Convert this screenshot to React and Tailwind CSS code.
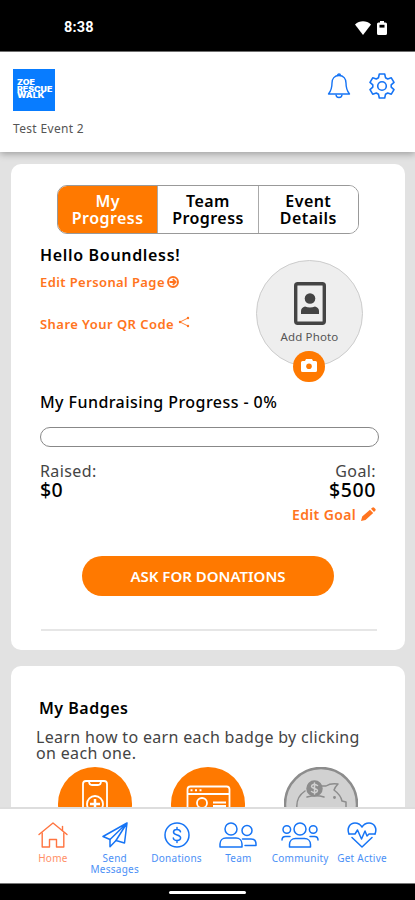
import React, { useState } from "react";

const HomeIcon = () => (
  <svg width="30" height="26" viewBox="0 0 30 26" fill="none" stroke="currentColor" strokeWidth="1.4" strokeLinejoin="round" strokeLinecap="round">
    <path d="M1 12.5 15 1l14 11.5" />
    <path d="M4.200 11v14h7.300v-7.500h7v7.500h7.300V11" />
    <path d="M24.500 8.500v-4" />
  </svg>
);

const SendIcon = () => (
  <svg width="26" height="26" viewBox="0 0 26 26" fill="none" stroke="currentColor" strokeWidth="1.500" strokeLinejoin="round" strokeLinecap="round">
    <path d="M25 1 1 14.500l7 3L25 1l-2.500 20-8.500-2.500L25 1" />
    <path d="M8 17.500v7.300l6-6.300" />
  </svg>
);

const DollarIcon = () => (
  <svg width="26" height="26" viewBox="0 0 26 26" fill="none" stroke="currentColor" strokeWidth="1.500" strokeLinecap="round">
    <circle cx="13" cy="13" r="12" />
    <path d="M16.500 9.800c-.3-1.500-1.600-2.300-3.500-2.300s-3.500.9-3.500 2.600c0 3.900 7.100 1.900 7.100 5.700 0 1.800-1.600 2.700-3.600 2.700-2.100 0-3.500-.9-3.700-2.500M13 5.500v2M13 18.500v2" />
  </svg>
);

const TeamIcon = () => (
  <svg width="38" height="26" viewBox="0 0 38 26" fill="none" stroke="currentColor" strokeWidth="1.500" strokeLinejoin="round" strokeLinecap="round">
    <circle cx="12" cy="7" r="6" />
    <path d="M1 25v-3c0-3.500 2.500-6 6-6h10c3.500 0 6 2.500 6 6v3z" />
    <circle cx="28" cy="8.500" r="5" />
    <path d="M23.500 17h8.500c3 0 5 2 5 5v1.500H26" />
  </svg>
);

const CommunityIcon = () => (
  <svg width="38" height="26" viewBox="0 0 38 26" fill="none" stroke="currentColor" strokeWidth="1.500" strokeLinejoin="round" strokeLinecap="round">
    <circle cx="19" cy="7" r="6" />
    <path d="M8.500 25v-2.500c0-3.500 2.500-6 6-6h9c3.500 0 6 2.500 6 6V25z" />
    <circle cx="5.800" cy="7.500" r="3.800" />
    <circle cx="32.200" cy="7.500" r="3.800" />
    <path d="M1 18c0-2.500 1.500-3.500 3.500-3.500H9M37 18c0-2.500-1.500-3.500-3.500-3.500H29" />
  </svg>
);

const HeartIcon = () => (
  <svg width="30" height="26" viewBox="0 0 30 26" fill="none" stroke="currentColor" strokeWidth="1.500" strokeLinejoin="round" strokeLinecap="round">
    <path d="M2 12C-.5 6 3 1 8 1c3.200 0 5.500 1.700 7 4 1.500-2.300 3.800-4 7-4 5 0 8.500 5 6 11" />
    <path d="M2 12h6l2.500-4 4 9 3.500-8 2 5 2-2h6M5 15.500 15 25l10-9.500" />
  </svg>
);

const BellIcon = () => (
  <svg width="24" height="26" viewBox="0 0 24 26" fill="none" stroke="currentColor" strokeWidth="1.400" strokeLinejoin="round">
    <path d="M12 2.500c-4.500 0-7 3.200-7 7.500 0 6-1 8-3.500 11h21C20 18 19 16 19 10c0-4.300-2.500-7.500-7-7.500z" />
    <path d="M10.500 2.500a1.500 1.500 0 0 1 3 0M9 21.500a3 3 0 0 0 6 0" />
  </svg>
);

const GearIcon = () => (
  <svg width="26" height="26" viewBox="0 0 26 26" fill="none" stroke="currentColor" strokeWidth="1.600" strokeLinejoin="round">
    <path d="M10.300 1h5.400l.8 3.700 2.200 1.300 3.600-1.200 2.700 4.600-2.800 2.500v2.200l2.800 2.500-2.700 4.600-3.600-1.200-2.200 1.300-.8 3.700h-5.400l-.8-3.700L7.300 20l-3.600 1.200L1 16.600l2.800-2.500v-2.200L1 9.400l2.700-4.600L7.300 6l2.200-1.300z" />
    <circle cx="13" cy="13" r="4.300" />
  </svg>
);

const PhoneBadge = () => (
  <svg width="74" height="74" viewBox="0 0 74 74" fill="none">
    <circle cx="37" cy="37" r="37" fill="#ff7900" />
    <g stroke="#fff" strokeWidth="1.800" strokeLinejoin="round">
      <rect x="25" y="14" width="24" height="46" rx="3" />
      <path d="M31 14c0 3 1 4 3 4h6c2 0 3-1 3-4" />
      <circle cx="37" cy="37" r="8" fill="#ff7900" />
      <path d="M37 32v10M32 37h10" strokeWidth="2.500" />
    </g>
  </svg>
);

const PageBadge = () => (
  <svg width="74" height="74" viewBox="0 0 74 74" fill="none">
    <circle cx="37" cy="37" r="37" fill="#ff7900" />
    <g stroke="#fff" strokeWidth="1.800" strokeLinejoin="round">
      <rect x="16.500" y="19.500" width="42" height="37" rx="3" />
      <path d="M16.500 27h42M42 35.500h13M42 39h13" />
      <path d="M19.500 23.300h2M24 23.300h2M28.500 23.300h2" strokeWidth="2" />
      <circle cx="31" cy="36" r="5" />
      <path d="M22 50c0-6 4-8 9-8s9 2 9 8" />
    </g>
  </svg>
);

const PiggyBadge = () => (
  <svg width="74" height="74" viewBox="0 0 74 74" fill="none">
    <circle cx="37" cy="37" r="36" fill="#d1d1d1" stroke="#8c8c8c" strokeWidth="2.500" />
    <g stroke="#8c8c8c" strokeWidth="1.500" strokeLinejoin="round" strokeLinecap="round">
      <path d="M21 24c-6 4-9 10-8 18 1 9 7 15 14 15h22l10-15h3v-7l-4-1c-1-5-4-8-8-11 1-3 2-4 4-6-6-1-9 0-12 2h-4" />
      <path d="M23 30c6-1.500 12-1.500 17 0" />
      <circle cx="30.500" cy="21.500" r="7.500" fill="#8c8c8c" />
      <path d="M33.500 18.500c-3-2-6-1-6 1s6 2 6 4-3 3-6 1M30.500 16v11" stroke="#d1d1d1" />
      <circle cx="50.500" cy="30.500" r=".7" />
    </g>
  </svg>
);

const tabs = [
  ["My", "Progress"],
  ["Team", "Progress"],
  ["Event", "Details"],
];

const navItems = [
  { label: "Home", icon: <HomeIcon />, style: "text-[#ff7440]" },
  { label: "Send Messages", icon: <SendIcon />, style: "text-[#1674f5]" },
  { label: "Donations", icon: <DollarIcon />, style: "text-[#1674f5]" },
  { label: "Team", icon: <TeamIcon />, style: "text-[#1674f5]" },
  { label: "Community", icon: <CommunityIcon />, style: "text-[#1674f5]" },
  { label: "Get Active", icon: <HeartIcon />, style: "text-[#1674f5]" },
];

const StatusBar = () => (
  <div className="flex h-[52px] shrink-0 items-center justify-between border-b border-[#777] bg-black pl-[64px] pr-[28px] pt-[5px] text-white">
    <span className="font-[Roboto,sans-serif] text-[14.5px] font-bold tracking-[0.2px]">8:38</span>
    <div className="flex items-center gap-[6px]">
      <svg width="16" height="14" viewBox="0 0 16 14" fill="currentColor">
        <path d="M8 14 0 3.500C4.500-.8 11.500-.8 16 3.500z" />
      </svg>
      <svg width="10" height="14" viewBox="0 0 10 14">
        <path d="M3 0h4v1.500h1.500Q10 1.500 10 3v9.500q0 1.500-1.500 1.500h-7Q0 14 0 12.500V3q0-1.500 1.500-1.500H3z" fill="currentColor" />
        <rect x="2.500" y="3.800" width="5" height="2.800" fill="#000" />
      </svg>
    </div>
  </div>
);

const Header = () => (
  <div className="z-10 flex h-[100px] shrink-0 justify-between bg-white pl-[13px] pr-[20px] shadow-[0_2px_7px_rgba(0,0,0,0.3)]">
    <div className="pt-[17px]">
      <div className="flex h-[42px] w-[42px] flex-col justify-center bg-[#087cff] pl-1 font-[Inter,sans-serif] text-[7px] font-black leading-[6.5px] text-white">
        <span className="w-[28px] origin-left scale-x-[1.25]">ZOE</span>
        <span className="w-[28px] origin-left scale-x-[1.25]">RESCUE</span>
        <span className="w-[28px] origin-left scale-x-[1.25]">WALK</span>
      </div>
      <p className="mt-[9px] text-[12px] leading-[18px] tracking-[0.33px] text-[#555]">Test Event 2</p>
    </div>
    <div className="flex gap-[18px] pt-[21px] text-[#1674f5]">
      <BellIcon />
      <GearIcon />
    </div>
  </div>
);

const App = () => {
  const [activeTab, setActiveTab] = useState(0);

  return (
    <div className="flex h-[900px] w-[415px] flex-col overflow-hidden bg-[#e2e2e2] font-['Noto_Sans',sans-serif] text-black">
      <StatusBar />
      <Header />
      <main className="min-h-0 flex-1 overflow-hidden pl-[11px] pr-[10px] pt-3">
        <section className="h-[486px] rounded-[10px] bg-white px-[30px] pt-[21px]">
          <div className="ml-4 flex h-[49px] w-[302px] overflow-hidden rounded-[10px] border border-[#999]">
            {tabs.map(([first, second], index) => (
              <button
                key={index}
                onClick={() => setActiveTab(index)}
                className={`flex flex-1 flex-col items-center justify-center border-r border-[#aaa] text-[16px] font-semibold leading-[17px] tracking-[0.45px] last:border-r-0 ${
                  activeTab === index ? "bg-[#ff7900] text-white" : "bg-white"
                }`}
              >
                <span>{first}</span>
                <span>{second}</span>
              </button>
            ))}
          </div>

          <div className="flex justify-between pr-[12px]">
            <div className="pt-[11px]">
              <h2 className="-ml-px text-[16px] font-semibold leading-5 tracking-[0.68px]">Hello Boundless!</h2>
              <button className="-ml-px mt-[7px] flex items-center gap-[2px] text-[13px] font-semibold leading-5 tracking-[0.4px] text-[#ff7420]">
                Edit Personal Page
                <svg width="12" height="12" viewBox="0 0 12 12" fill="none" stroke="currentColor" strokeWidth="1.900">
                  <circle cx="6" cy="6" r="5" />
                  <path d="M2.500 6H8.500M5.800 3.200 8.600 6 5.800 8.800" />
                </svg>
              </button>
              <button className="-ml-px mt-[22px] flex items-center gap-[4px] text-[13px] font-semibold leading-5 tracking-[0.45px] text-[#ff7420]">
                Share Your QR Code
                <svg className="-mt-1" width="12" height="12" viewBox="0 0 12 12" fill="none" stroke="currentColor" strokeWidth=".9">
                  <path d="M10 2 2 6l8 4" />
                  <g fill="currentColor" stroke="none">
                    <circle cx="10" cy="2" r="1.200" />
                    <circle cx="2" cy="6" r="1.200" />
                    <circle cx="10" cy="10" r="1.200" />
                  </g>
                </svg>
              </button>
            </div>
            <div className="relative mt-[26px] flex h-[107px] w-[107px] flex-col items-center rounded-full border border-[#ccc] bg-[#eee] pt-[21px]">
              <svg width="32" height="43" viewBox="0 0 32 43" fill="#444">
                <rect x="1.700" y="1.700" width="28.600" height="39.600" rx="2" fill="none" stroke="#444" strokeWidth="3.400" />
                <circle cx="16" cy="16.500" r="5.300" />
                <path d="M7 32v-3q0-3.500 4-4.500 5 2 10 0 4 1 4 4.500v3z" />
              </svg>
              <span className="mt-[4px] whitespace-nowrap text-[11.500px] leading-4 tracking-[0.15px] text-[#555]">Add Photo</span>
              <button className="absolute left-[36px] top-[90px] flex h-[31px] w-[32px] items-center justify-center rounded-full bg-[#ff7900]">
                <svg className="-mt-[3px]" width="16" height="13" viewBox="0 0 16 13">
                  <path d="M1.500 2H4l1-2h6l1 2h2.500Q16 2 16 3.500v8q0 1.500-1.500 1.500h-13Q0 13 0 11.500v-8Q0 2 1.500 2z" fill="#fff" />
                  <circle cx="8" cy="7.300" r="2.800" fill="#ff7900" />
                </svg>
              </button>
            </div>
          </div>

          <h3 className="-ml-px mt-[23px] text-[16px] font-medium leading-6 tracking-[0.43px]">My Fundraising Progress - 0%</h3>
          <div className="-ml-px mt-[13px] h-[20px] w-[339px] rounded-full border border-[#888]" />

          <div className="-mx-px mt-[14px] flex justify-between">
            <div>
              <p className="text-[16px] leading-5 tracking-[0.4px] text-[#444]">Raised:</p>
              <p className="text-[19.500px] font-medium leading-[18px] tracking-[0.3px]">$0</p>
            </div>
            <div className="flex flex-col items-end">
              <p className="text-[16px] leading-5 tracking-[0.4px] text-[#444]">Goal:</p>
              <p className="text-[19.500px] font-medium leading-[18px] tracking-[0.6px]">$500</p>
              <button className="mt-[6px] flex items-center gap-[5px] text-[14px] font-semibold leading-5 tracking-[0.35px] text-[#ff7420]">
                Edit Goal
                <svg className="-mt-[3px]" width="15" height="14" viewBox="0 0 15 14" fill="currentColor">
                  <path d="m0 14 1.200-4.500L9 2.700 12.200 6l-7.700 7zM10 1.800 11.200.8q1-1 2 0l1 1q1 1 0 2L13 5z" />
                </svg>
              </button>
            </div>
          </div>

          <button className="ml-[41px] mt-[31px] flex h-[40px] w-[252px] items-center justify-center rounded-full bg-[#ff7900] text-[15px] font-semibold text-white">
            ASK FOR DONATIONS
          </button>
          <hr className="mt-[33px] w-[336px] border-t-2 border-[#e6e6e6]" />
        </section>

        <section className="mt-4 h-[260px] rounded-t-[10px] bg-white px-[25px] pt-[32px]">
          <h3 className="ml-[3px] text-[16px] font-semibold leading-5 tracking-[0.5px]">My Badges</h3>
          <p className="mt-[11px] w-[335px] text-[16px] leading-4 tracking-[0.33px] text-[#444]">
            Learn how to earn each badge by clicking on each one.
          </p>
          <div className="ml-[22px] mt-[6px] flex gap-[39px]">
            <PhoneBadge />
            <PageBadge />
            <PiggyBadge />
          </div>
        </section>
      </main>

      <nav className="z-10 flex h-[76px] shrink-0 border-t-2 border-[#ddd] bg-white pl-[22px] pr-[22px] pt-[13px]">
        {navItems.map((item) => (
          <button key={item.label} className={`flex flex-1 flex-col items-center ${item.style}`}>
            {item.icon}
            <span className="mt-[5px] text-center text-[10px] leading-[10.500px] tracking-[0.25px] opacity-80">{item.label}</span>
          </button>
        ))}
      </nav>
      <div className="flex h-[17px] shrink-0 items-center justify-center border-t border-[#777] bg-black">
        <div className="h-[3px] w-[77px] rounded-full bg-white" />
      </div>
    </div>
  );
};

export default App;
